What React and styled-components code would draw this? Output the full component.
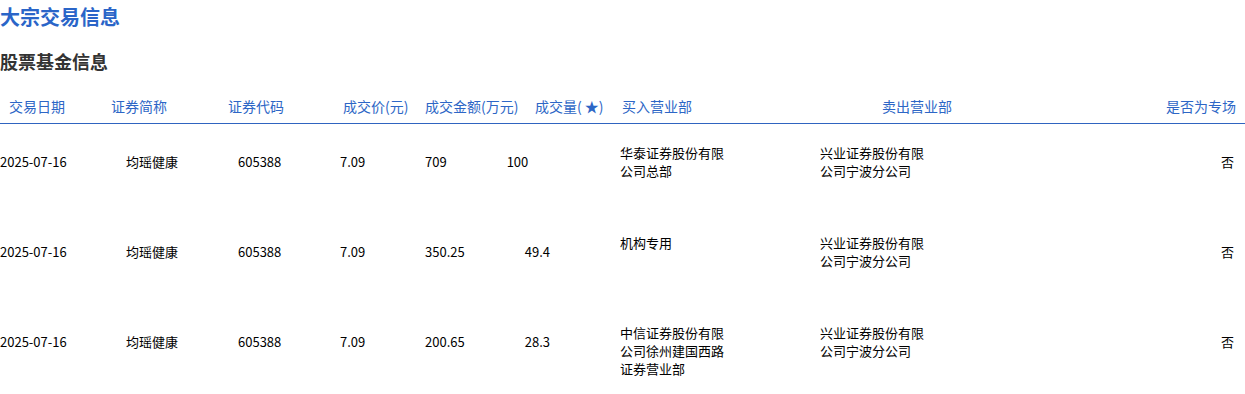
import styled, { createGlobalStyle } from 'styled-components';

const GlobalStyle = createGlobalStyle`
  html, body {
    margin: 0;
    padding: 0;
    background: #fff;
  }
  body {
    font-family: "Noto Sans CJK SC", "Noto Sans", sans-serif;
    color: #000;
  }
`;

const headers = [
  { label: '交易日期', width: 102 },
  { label: '证券简称', width: 117 },
  { label: '证券代码', width: 115 },
  { label: '成交价(元)', width: 82 },
  { label: '成交金额(万元)', width: 110 },
  { label: '成交量( ★)', width: 87 },
  { label: '买入营业部', width: 260 },
  { label: '卖出营业部', width: 260 },
  { label: '是否为专场', align: 'right' },
];

const rows = [
  {
    date: '2025-07-16',
    name: '均瑶健康',
    code: '605388',
    price: '7.09',
    amount: '709',
    volume: '100',
    buy: ['华泰证券股份有限', '公司总部'],
    sell: ['兴业证券股份有限', '公司宁波分公司'],
    special: '否',
  },
  {
    date: '2025-07-16',
    name: '均瑶健康',
    code: '605388',
    price: '7.09',
    amount: '350.25',
    volume: '49.4',
    buy: ['机构专用'],
    sell: ['兴业证券股份有限', '公司宁波分公司'],
    special: '否',
  },
  {
    date: '2025-07-16',
    name: '均瑶健康',
    code: '605388',
    price: '7.09',
    amount: '200.65',
    volume: '28.3',
    buy: ['中信证券股份有限', '公司徐州建国西路', '证券营业部'],
    sell: ['兴业证券股份有限', '公司宁波分公司'],
    special: '否',
  },
];

const App = () => {
  return (
    <Page>
      <GlobalStyle />
      <Title>大宗交易信息</Title>
      <Subtitle>股票基金信息</Subtitle>
      <HeaderRow>
        {headers.map((h) => (
          <HeaderCell key={h.label} $width={h.width} $align={h.align}>
            {h.label}
          </HeaderCell>
        ))}
      </HeaderRow>
      {rows.map((r, i) => (
        <Row key={i}>
          <Cell $width={126}>{r.date}</Cell>
          <Cell $width={112}>{r.name}</Cell>
          <Cell $width={102}>{r.code}</Cell>
          <Cell $width={85}>{r.price}</Cell>
          <FlowGroup>
            <Cell>{r.amount}</Cell>
            <Cell>{r.volume}</Cell>
          </FlowGroup>
          <MultiCell $width={200}>
            {r.buy.map((line) => (
              <div key={line}>{line}</div>
            ))}
          </MultiCell>
          <MultiCell $width={200}>
            {r.sell.map((line) => (
              <div key={line}>{line}</div>
            ))}
          </MultiCell>
          <Cell $grow $align="right">
            {r.special}
          </Cell>
        </Row>
      ))}
    </Page>
  );
};

export default App;

const Page = styled.div`
  width: 1245px;
`;

const Title = styled.h1`
  margin: 0;
  font-size: 20px;
  line-height: 34px;
  font-weight: 700;
  color: #2a65c8;
`;

const Subtitle = styled.h2`
  margin: 17px 0 0;
  font-size: 18px;
  line-height: 20px;
  font-weight: 700;
  color: #333;
`;

const HeaderRow = styled.div`
  display: flex;
  padding: 25px 0 7px;
  border-bottom: 1px solid #2f64c0;
`;

const HeaderCell = styled.div`
  box-sizing: border-box;
  width: ${(p) => (p.$width ? `${p.$width}px` : 'auto')};
  flex: ${(p) => (p.$width ? 'none' : '1')};
  padding: 0 9px;
  font-size: 14px;
  line-height: 20px;
  color: #2d66c6;
  text-align: ${(p) => p.$align || 'left'};
  white-space: nowrap;
`;

const Row = styled.div`
  display: flex;
  align-items: flex-start;
  height: 90px;
  padding-top: 20px;
  box-sizing: border-box;
  font-size: 13px;
  line-height: 18px;
`;

const Cell = styled.div`
  box-sizing: border-box;
  height: 36px;
  display: flex;
  align-items: center;
  justify-content: ${(p) => (p.$align === 'right' ? 'flex-end' : 'flex-start')};
  width: ${(p) => (p.$width ? `${p.$width}px` : 'auto')};
  flex: ${(p) => (p.$grow ? '1' : 'none')};
  padding-right: ${(p) => (p.$align === 'right' ? '11px' : '0')};
  white-space: nowrap;
`;

const FlowGroup = styled.div`
  display: flex;
  gap: 60px;
  width: 195px;
  flex: none;
`;

const MultiCell = styled.div`
  width: ${(p) => `${p.$width}px`};
  flex: none;
  height: 36px;
  overflow: visible;
`;
